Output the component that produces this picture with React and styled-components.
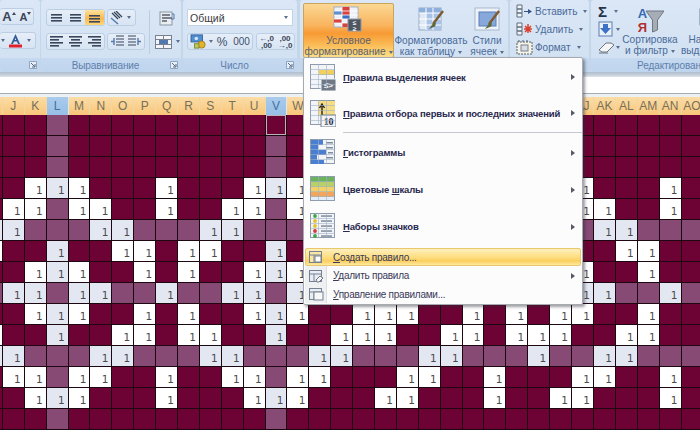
import React from "react";
import styled, { createGlobalStyle } from "styled-components";

const GlobalStyle = createGlobalStyle`
  html, body { margin: 0; padding: 0; background: #fff; }
  * { box-sizing: border-box; }
`;

const Root = styled.div`
  position: relative;
  width: 700px;
  height: 431px;
  overflow: hidden;
  font-family: "Liberation Sans", Arial, sans-serif;
`;

/* ---------- ribbon ---------- */
const Ribbon = styled.div`
  display: flex;
  height: 72px;
  background: #c3d6ea;
`;

const Group = styled.div`
  flex: none;
  width: ${(p) => p.$w}px;
  margin-left: ${(p) => p.$ml || 0}px;
  display: flex;
  flex-direction: column;
  background: linear-gradient(#dbe7f6, #d3e2f3 70%);
  border-radius: 3px;
  overflow: hidden;
`;

const Body = styled.div`
  flex: 1;
  display: flex;
  min-height: 0;
  padding: ${(p) => p.$pad || "0"};
`;

const Label = styled.div`
  flex: none;
  height: 14px;
  display: flex;
  align-items: center;
  background: linear-gradient(#c5d9f0, #bfd5ee);
  color: #5f7fab;
  font-size: 10px;
  padding-right: 3px;
`;

const LabelText = styled.span`
  flex: 1;
  text-align: center;
  white-space: nowrap;
  letter-spacing: -0.1px;
`;

const ShadowStrip = styled.div`
  height: 5px;
  background: linear-gradient(#aebdcd, #c6d0db 60%, #dfe5ec);
`;

const FormulaBar = styled.div`
  height: 17px;
  background: #fff;
  border-bottom: 1px solid #a5acb3;
`;

const Spacer = styled.div`
  height: 3px;
  background: #eef1f4;
`;

const Rows = styled.div`
  display: flex;
  flex-direction: column;
  gap: ${(p) => p.$gap || 0}px;
`;

const Row = styled.div`
  display: flex;
  align-items: center;
  justify-content: ${(p) => p.$justify || "flex-start"};
  height: 17px;
  gap: ${(p) => p.$gap || 0}px;
`;

const ToolGroup = styled.div`
  display: flex;
  align-items: center;
  height: 17px;
  border: 1px solid #bccee4;
  border-left-width: ${(p) => (p.$open ? 0 : 1)}px;
  border-radius: 3px;
  background: linear-gradient(#e6eef8, #d7e4f3);
`;

const Tool = styled.div`
  flex: none;
  width: ${(p) => p.$w || 19}px;
  height: 15px;
  display: flex;
  align-items: center;
  justify-content: center;
  font-size: ${(p) => p.$fs || 11}px;
  font-weight: ${(p) => (p.$bold ? "bold" : "normal")};
  color: ${(p) => (p.$bold ? "#3a4658" : "#3d4f6b")};
  background: ${(p) =>
    p.$active ? "linear-gradient(#fde3a0, #fbb84f 55%, #fdd77c)" : "transparent"};
`;

const DecimalTool = styled(Tool)`
  flex-direction: column;
  line-height: 7px;
`;

const Divider = styled.div`
  width: 1px;
  height: 44px;
  margin: 1px 3px 0 4px;
  background: #bccde1;
`;

const StackCol = styled.div`
  flex: 1;
  display: flex;
  flex-direction: column;
  align-items: center;
  gap: 7px;
`;

const Combo = styled.div`
  width: 106px;
  height: 17px;
  display: flex;
  align-items: center;
  justify-content: space-between;
  padding: 0 4px 0 2px;
  background: #fff;
  border: 1px solid #c4d4e6;
  color: #3c3c44;
  font-size: 10.5px;
`;

const BigButton = styled.div`
  flex: none;
  width: ${(p) => p.$w}px;
  height: 55px;
  margin-left: ${(p) => p.$ml || 0}px;
  display: flex;
  flex-direction: column;
  align-items: center;
  padding-top: 3px;
  border-radius: 2px;
  color: #4a6a98;
  font-size: 10.1px;
  line-height: 11px;
  white-space: nowrap;
  ${(p) =>
    p.$hot &&
    `background: linear-gradient(#fbd894, #f9b45f 40%, #f79a34 55%, #fbc05c 80%, #fde08c);
     border: 1px solid #c9a45c;
     color: #57616e;
     padding-top: 2px;`}
`;

const BigIcon = styled.div`
  height: 29px;
  display: flex;
  align-items: flex-start;
`;

const CellCommand = styled.div`
  height: 18px;
  display: flex;
  align-items: center;
  gap: ${(p) => p.$gap ?? 2}px;
  color: #4a6a98;
  font-size: 10px;
  white-space: nowrap;
`;

const SigmaGlyph = styled.span`
  font-size: 15px;
  font-weight: bold;
  color: #27324a;
  line-height: 15px;
`;

const Caret = styled.span`
  display: inline-block;
  width: 0;
  height: 0;
  margin-left: ${(p) => p.$ml ?? 4}px;
  vertical-align: middle;
  border-left: 2.5px solid transparent;
  border-right: 2.5px solid transparent;
  border-top: 3px solid #5b6f8c;
`;

const Icon = styled.svg`
  display: block;
  flex: none;
  ${(p) => p.$flip && "transform: scaleX(-1);"}
  ${(p) => p.$raised && "margin-bottom: 7px;"}
`;

/* ---------- sheet ---------- */
const COLS = "I J K L M N O P Q R S T U V W X Y Z AA AB AC AD AE AF AG AH AI AJ AK AL AM AN AO".split(" ");
const BAND_COLS = ["L", "V"];
const BAND_ROWS = [5, 8, 11];

const ONES = [
  [],
  [],
  [],
  ["K", "L", "M", "Q", "U", "V", "W", "AJ", "AN"],
  ["J", "K", "M", "N", "Q", "T", "U", "W", "AJ", "AK", "AN"],
  ["I", "J", "N", "O", "S", "T", "AK", "AL"],
  ["I", "L", "O", "P", "R", "S", "V", "AL", "AM"],
  ["K", "L", "M", "P", "R", "U", "V", "W", "AJ", "AM"],
  ["J", "K", "M", "N", "Q", "T", "U", "W", "AJ", "AK", "AN"],
  ["K", "L", "M", "P", "R", "U", "V", "W", "Z", "AA", "AB", "AE", "AG", "AI", "AJ", "AM"],
  ["I", "L", "O", "P", "R", "S", "V", "Y", "Z", "AA", "AD", "AE", "AG", "AH", "AI", "AL", "AM"],
  ["I", "J", "N", "O", "S", "T", "X", "Y", "AC", "AD", "AH", "AK", "AL"],
  ["J", "K", "M", "N", "Q", "T", "U", "W", "X", "AB", "AC", "AF", "AJ", "AK", "AN"],
  ["K", "L", "M", "Q", "U", "V", "W", "AA", "AB", "AF", "AI", "AJ", "AN"],
  [],
];

const Sheet = styled.div`
  margin-left: -19px;
  width: 760px;
`;

const Grid = styled.div`
  display: grid;
  grid-template-columns: repeat(${COLS.length}, 21.9px);
  grid-auto-rows: ${(p) => p.$row}px;
`;

const HeadCell = styled.div`
  display: flex;
  align-items: center;
  justify-content: center;
  font-size: 12px;
  color: ${(p) => (p.$on ? "#47709f" : "#77705a")};
  background: ${(p) =>
    p.$on ? "linear-gradient(#a9cbec, #98bfe6)" : "linear-gradient(#fbdda6, #f9c679)"};
  border-right: 1px solid ${(p) => (p.$on ? "#dce8f4" : "#f2d6a8")};
`;

const cellBg = { dark: "#6d0334", band: "#874a74", one: "#ffffff", bandOne: "#e3e7f2" };

const Cell = styled.div`
  display: flex;
  align-items: flex-end;
  justify-content: flex-end;
  padding: 0 3px 2px 0;
  background: ${(p) => cellBg[p.$kind]};
  border-right: 1px solid #1d0711;
  border-bottom: 1px solid #1d0711;
  color: #4a4a4a;
  font-family: "DejaVu Sans", sans-serif;
  font-size: 10.5px;
  line-height: 11px;
  ${(p) => p.$selected && "box-shadow: inset 0 0 0 1px #b9b4bc;"}
`;

/* ---------- dropdown menu ---------- */
const Menu = styled.div`
  position: absolute;
  left: 303px;
  top: 57px;
  width: 280px;
  height: 248px;
  padding-top: 1px;
  display: flex;
  flex-direction: column;
  background: #fcfcfd;
  border: 1px solid #a7abb0;
  border-radius: 2px;
  box-shadow: 2px 2px 3px rgba(40, 40, 50, 0.45);
`;

const BigItem = styled.div`
  flex: none;
  height: ${(p) => p.$h}px;
  display: flex;
  align-items: center;
  padding: 0 7px 0 6px;
  color: #29294d;
  font-size: 9.5px;
  font-weight: bold;
  letter-spacing: -0.15px;
`;

const ItemIcon = styled.div`
  flex: none;
  width: 33px;
`;

const ItemText = styled.span`
  flex: 1;
  white-space: nowrap;
`;

const Arrow = styled.span`
  flex: none;
  width: 0;
  height: 0;
  border-top: 3.5px solid transparent;
  border-bottom: 3.5px solid transparent;
  border-left: 4px solid #555a66;
`;

const Separator = styled.div`
  flex: none;
  height: 3px;
  margin-left: 39px;
  display: flex;
  align-items: center;
  &::before {
    content: "";
    flex: 1;
    height: 1px;
    background: #c6c9ce;
  }
`;

const SmallItem = styled.div`
  flex: none;
  height: ${(p) => p.$h}px;
  margin: ${(p) => (p.$active ? "3px 1px 0" : "0 1px")};
  display: flex;
  align-items: center;
  padding-right: 6px;
  color: #3a3a58;
  font-size: 10px;
  letter-spacing: -0.25px;
  ${(p) =>
    p.$active &&
    `background: linear-gradient(#fef0bd, #fddc7c 55%, #fbcf5e 75%, #fee9a2);
     border: 1px solid #e9c76c;
     border-radius: 2px;`}
`;

const Gutter = styled.div`
  flex: none;
  width: ${(p) => (p.$plain ? 21 : 22)}px;
  align-self: stretch;
  display: flex;
  align-items: center;
  justify-content: center;
  margin-right: 6px;
  background: ${(p) => (p.$plain ? "transparent" : "#eff0f2")};
  border-right: 1px solid ${(p) => (p.$plain ? "transparent" : "#dcdee2")};
`;

/* ---------- icons ---------- */
const Lines = ({ rows, w = 15, h = 13, c = "#39475c" }) => (
  <Icon width={w} height={h} viewBox={`0 0 ${w} ${h}`}>
    {rows.map(([a, b, y], i) => (
      <rect key={i} x={a} y={y} width={b - a} height="1.6" fill={c} />
    ))}
  </Icon>
);

const FontUp = ({ up }) => (
  <Tool $w={up ? 18 : 15} $fs={up ? 13 : 11} $bold>
    A
    <Icon width="4" height="3" viewBox="0 0 4 3" $raised>
      <path d={up ? "M0 3L2 0l2 3z" : "M0 0l2 3 2-3z"} fill="#445" />
    </Icon>
  </Tool>
);

const FontColor = () => (
  <Icon width="15" height="15" viewBox="0 0 15 15">
    <path d="M7.5 1L3 11h2l1-2.6h3L10 11h2L7.5 1zM6.8 7l.7-2.2L8.2 7z" fill="#2d5a9a" />
    <rect x="1" y="11.5" width="13" height="3" fill="#e0202a" />
  </Icon>
);

const Orientation = () => (
  <Icon width="16" height="14" viewBox="0 0 16 14">
    <path d="M2 2l6 6M4 1l6 6M6 0l6 6" stroke="#39475c" strokeWidth="1.3" />
    <path d="M1 7l7 6" stroke="#5278ad" strokeWidth="1.4" />
  </Icon>
);

const Indent = ({ flip }) => (
  <Icon width="14" height="13" viewBox="0 0 14 13" $flip={flip}>
    <path d="M6 1h8M6 4h8M6 7h8M6 10h8" stroke="#39475c" strokeWidth="1.2" />
    <path d="M4 3v7M1 6.5h3" stroke="#5278ad" strokeWidth="1.4" />
  </Icon>
);

const Wrap = () => (
  <Icon width="16" height="16" viewBox="0 0 16 16">
    <rect x="1" y="2" width="12" height="13" fill="#e9edf2" stroke="#8b97a5" />
    <path d="M3 5h8M3 8h10M3 11h5" stroke="#555f6d" strokeWidth="1.4" />
    <path d="M13 4h2v5h-3" stroke="#5278ad" fill="none" />
  </Icon>
);

const Merge = () => (
  <Icon width="17" height="14" viewBox="0 0 17 14">
    <rect x="0.5" y="0.5" width="16" height="13" fill="#f3f5f8" stroke="#77818f" />
    <path d="M0 4.5h17M0 9.5h17" stroke="#77818f" />
    <rect x="4" y="5" width="9" height="4" fill="#5278ad" />
    <path d="M8.5 0v4M8.5 10v4" stroke="#77818f" />
  </Icon>
);

const Currency = () => (
  <Icon width="19" height="15" viewBox="0 0 19 17">
    <rect x="1" y="1" width="13" height="8" fill="#4f8fd0" stroke="#2f5f9c" />
    <circle cx="7" cy="5" r="2" fill="#d4e6f8" />
    <circle cx="13" cy="12" r="4" fill="#e3b330" stroke="#a47c12" />
    <rect x="5" y="11" width="5" height="5" fill="#b8c85a" stroke="#7c8a2a" />
  </Icon>
);

const Decimal = ({ more }) => (
  <DecimalTool $w={more ? 19 : 18} $fs={8} $bold>
    <span>{more ? "←,0" : ",00"}</span>
    <span>{more ? ",00" : "→,0"}</span>
  </DecimalTool>
);

const CondIcon = () => (
  <Icon width="32" height="27" viewBox="0 0 32 27">
    <rect x="1" y="1" width="24" height="20" fill="#eef2f8" stroke="#9fb0c6" />
    <rect x="1" y="5" width="8" height="4" fill="#5e8fd0" />
    <rect x="9" y="1" width="8" height="8" fill="#d8423e" />
    <rect x="9" y="9" width="8" height="4" fill="#3f6fc0" />
    <rect x="1" y="13" width="8" height="4" fill="#d8423e" />
    <rect x="9" y="17" width="8" height="4" fill="#d8423e" />
    <path d="M9 1v20M17 1v20M1 5h24M1 9h24M1 13h24M1 17h24" stroke="#fff" strokeWidth="0.8" />
    <rect x="15" y="13" width="13" height="12" fill="#4e5662" stroke="#8f98a4" />
    <text x="21.5" y="19" textAnchor="middle" fontSize="6.5" fontWeight="bold" fill="#fff" fontFamily="Liberation Sans">≤</text>
    <text x="21.5" y="24.5" textAnchor="middle" fontSize="6.5" fontWeight="bold" fill="#fff" fontFamily="Liberation Sans">≥</text>
  </Icon>
);

const BrushTable = ({ big }) => (
  <Icon width="30" height="27" viewBox="0 0 30 27">
    {big ? (
      <>
        <rect x="3" y="2" width="22" height="22" fill="#dfe8f5" stroke="#96abc6" />
        <rect x="3" y="2" width="22" height="5" fill="#8fb0dc" />
        <rect x="10" y="7" width="15" height="17" fill="#a9c4e8" />
        <path d="M10 2v22M17 2v22M3 7h22M3 13h22M3 19h22" stroke="#fff" />
      </>
    ) : (
      <>
        <rect x="3" y="2" width="24" height="22" fill="#eef3fa" stroke="#a9b8cc" />
        <rect x="7" y="6" width="17" height="14" fill="#86a8db" stroke="#5a7fb8" />
      </>
    )}
    <path d="M27 5L17 18" stroke="#7d5a2c" strokeWidth="2.4" />
    <path d="M18 16l-5 7 6-2.5 1-3z" fill="#5d6a3a" />
  </Icon>
);

const Insert = ({ mark, c }) => (
  <Icon width="17" height="16" viewBox="0 0 17 16">
    <path d="M1 2h5v4H1zM1 6h5v4H1zM1 10h5v4H1z" fill="#f2f5f9" stroke="#5f6c7c" />
    {mark === "arrow" ? (
      <path d="M8 8h4V6l4 2.5-4 2.5V9H8z" fill={c} />
    ) : (
      <path d="M9 5l6 6M15 5l-6 6M12 3v9M8 8h8" stroke={c} strokeWidth="1.5" />
    )}
  </Icon>
);

const FormatIcon = () => (
  <Icon width="17" height="16" viewBox="0 0 17 16">
    <rect x="1" y="3" width="15" height="12" fill="#f7f4e6" stroke="#555f6d" strokeDasharray="2 1" />
    <rect x="5" y="6" width="7" height="6" fill="#d9dee6" stroke="#77818f" />
    <path d="M3 3V1M7 3V1M11 3V1" stroke="#555f6d" />
  </Icon>
);

const FillDown = () => (
  <Icon width="15" height="16" viewBox="0 0 15 16">
    <rect x="1" y="1" width="13" height="14" fill="#eaf0f8" stroke="#5b7db0" />
    <path d="M5 3h5v4h3l-5.5 6L2 7h3z" fill="#3b72c8" />
  </Icon>
);

const Eraser = () => (
  <Icon width="17" height="13" viewBox="0 0 17 13">
    <path d="M1 9l7-7h5l3 2-7 7H4z" fill="#f5f5f5" stroke="#6d7582" />
    <path d="M1 12h9" stroke="#6d7582" />
  </Icon>
);

const SortFilter = () => (
  <Icon width="27" height="28" viewBox="0 0 27 28">
    <text x="5.5" y="13" textAnchor="middle" fontSize="13" fontWeight="bold" fill="#3568b5" fontFamily="Liberation Sans">А</text>
    <text x="5.5" y="27" textAnchor="middle" fontSize="13" fontWeight="bold" fill="#b03030" fontFamily="Liberation Sans">Я</text>
    <path d="M9 6h18l-6.5 9v10l-5 2V15z" fill="#a7adb6" stroke="#6f7783" />
  </Icon>
);

const Binoculars = () => (
  <Icon width="18" height="24" viewBox="0 0 18 24">
    <rect x="2" y="3" width="5" height="18" rx="1" fill="#e6eef8" stroke="#6d7f98" />
    <rect x="11" y="3" width="5" height="18" rx="1" fill="#e6eef8" stroke="#6d7f98" />
    <rect x="7" y="8" width="4" height="6" fill="#8da3c0" />
  </Icon>
);

const launcher = (
  <Icon width="8" height="8" viewBox="0 0 8 8">
    <path d="M0.5 7.5v-7h7v7z" fill="#e8eff8" stroke="#8ea5c4" />
    <path d="M2 2l3.5 3.5M6 3v3H3" stroke="#55677f" fill="none" />
  </Icon>
);

const MenuFrame = ({ children }) => (
  <Icon width="26" height="27" viewBox="0 0 26 27">
    <rect x="0.5" y="0.5" width="24" height="24" fill="#f2f4f8" stroke="#8d9bad" />
    {children}
    <path d="M0 5.5h25M0 10.5h25M0 15.5h25M0 20.5h25M8.5 0v25M16.5 0v25" stroke="#9fb1c8" strokeWidth="0.6" />
  </Icon>
);

const menuIcons = {
  rules: (
    <MenuFrame>
      <rect x="9" y="6" width="15" height="5" fill="#f2cf5e" />
      <rect x="11" y="15" width="15" height="12" fill="#6f7885" stroke="#f0f2f5" />
      <text x="18.5" y="24" textAnchor="middle" fontSize="8" fontWeight="bold" fill="#fff" fontFamily="Liberation Sans">≤&gt;</text>
    </MenuFrame>
  ),
  top: (
    <MenuFrame>
      <rect x="8" y="1" width="17" height="15" fill="#f6dc84" />
      <path d="M12 15V5M9.5 8L12 4l2.5 4" stroke="#222" strokeWidth="1.4" fill="none" />
      <rect x="11" y="15" width="15" height="12" fill="#f1f3f6" stroke="#77818f" />
      <text x="18.5" y="25" textAnchor="middle" fontSize="10" fontWeight="bold" fill="#1d2a44" fontFamily="Liberation Serif">10</text>
    </MenuFrame>
  ),
  bars: (
    <MenuFrame>
      <path d="M1 1h12v5H8v5h8v5H7v5h7v4H1z" fill="#4a7ed0" />
      <rect x="16" y="3" width="7" height="1.5" fill="#7f8b9a" />
      <rect x="16" y="8" width="7" height="1.5" fill="#7f8b9a" />
      <rect x="18" y="13" width="5" height="1.5" fill="#7f8b9a" />
      <rect x="16" y="18" width="7" height="1.5" fill="#7f8b9a" />
    </MenuFrame>
  ),
  scales: (
    <MenuFrame>
      <rect x="1" y="1" width="23" height="5" fill="#6cb35e" />
      <rect x="1" y="6" width="23" height="5" fill="#b9cf68" />
      <rect x="1" y="11" width="23" height="5" fill="#f4d166" />
      <rect x="1" y="16" width="23" height="5" fill="#f2a65c" />
      <rect x="1" y="21" width="23" height="3" fill="#e3edf7" />
    </MenuFrame>
  ),
  sets: (
    <MenuFrame>
      {["#3fa548", "#e7c22c", "#e7c22c", "#d33a32", "#3fa548"].map((c, i) => (
        <React.Fragment key={i}>
          <circle cx="5" cy={3 + i * 5} r="1.9" fill={c} />
          <rect x="11" y={2.3 + i * 5} width="11" height="1.5" fill="#7f8b9a" />
        </React.Fragment>
      ))}
    </MenuFrame>
  ),
};

const SmallTable = ({ tint, children }) => (
  <Icon width="16" height="16" viewBox="0 0 16 16">
    <rect x="1.5" y="2.5" width="12" height="11" fill={tint} stroke="#77818f" />
    <path d="M1.5 6h12M6 6v7.5" stroke="#77818f" />
    {children}
  </Icon>
);

const Underlined = ({ before = "", letter, after }) => (
  <>
    {before}
    <u>{letter}</u>
    {after}
  </>
);

const App = () => (
  <Root>
    <GlobalStyle />
    <Ribbon>
      <Group $w={40}>
        <Body $pad="8px 0 0 0">
          <Rows $gap={7}>
            <Row>
              <ToolGroup $open>
                <FontUp up />
                <FontUp />
              </ToolGroup>
            </Row>
            <Row>
              <ToolGroup $open>
                <Caret $ml={1} />
                <Tool $w={21}><FontColor /></Tool>
                <Caret $ml={1} />
                <Tool $w={4} />
              </ToolGroup>
            </Row>
          </Rows>
        </Body>
        <Label>
          <LabelText />
          {launcher}
        </Label>
      </Group>

      <Group $w={140} $ml={1}>
        <Body $pad="9px 0 0 5px">
          <Rows $gap={7}>
            <Row $gap={2}>
              <ToolGroup>
                <Tool><Lines rows={[[2, 13, 1], [2, 13, 4], [2, 13, 7]]} h={10} /></Tool>
                <Tool><Lines rows={[[2, 13, 2], [2, 13, 5], [2, 13, 8]]} h={11} /></Tool>
                <Tool $active><Lines rows={[[2, 13, 4], [2, 13, 7], [2, 13, 10]]} /></Tool>
              </ToolGroup>
              <ToolGroup>
                <Tool $w={19}><Orientation /></Tool>
                <Caret $ml={0} />
                <Tool $w={4} />
              </ToolGroup>
            </Row>
            <Row $gap={2}>
              <ToolGroup>
                <Tool><Lines rows={[[1, 14, 1], [1, 10, 4], [1, 14, 7], [1, 10, 10]]} /></Tool>
                <Tool><Lines rows={[[1, 14, 1], [3, 12, 4], [1, 14, 7], [3, 12, 10]]} /></Tool>
                <Tool><Lines rows={[[1, 14, 1], [5, 14, 4], [1, 14, 7], [5, 14, 10]]} /></Tool>
              </ToolGroup>
              <ToolGroup>
                <Tool $w={18}><Indent /></Tool>
                <Tool $w={18}><Indent flip /></Tool>
              </ToolGroup>
            </Row>
          </Rows>
          <Divider />
          <StackCol>
            <Row><Wrap /></Row>
            <Row>
              <Merge />
              <Caret />
            </Row>
          </StackCol>
        </Body>
        <Label>
          <LabelText>Выравнивание</LabelText>
          {launcher}
        </Label>
      </Group>

      <Group $w={114} $ml={2}>
        <Body $pad="9px 0 0 4px">
          <Rows $gap={7}>
            <Combo>
              Общий
              <Caret $ml={0} />
            </Combo>
            <Row $gap={3}>
              <ToolGroup>
                <Tool $w={20}><Currency /></Tool>
                <Caret $ml={1} />
                <Tool $w={18} $fs={12}>%</Tool>
                <Tool $w={21} $fs={10}>000</Tool>
              </ToolGroup>
              <ToolGroup>
                <Decimal more />
                <Decimal />
              </ToolGroup>
            </Row>
          </Rows>
        </Body>
        <Label>
          <LabelText>Число</LabelText>
          {launcher}
        </Label>
      </Group>

      <Group $w={208} $ml={3}>
        <Body $pad="3px 0 0 3px">
          <BigButton $w={91} $hot>
            <BigIcon><CondIcon /></BigIcon>
            <span>Условное</span>
            <span>форматирование<Caret $ml={3} /></span>
          </BigButton>
          <BigButton $w={72} $ml={1}>
            <BigIcon><BrushTable big /></BigIcon>
            <span>Форматировать</span>
            <span>как таблицу<Caret $ml={3} /></span>
          </BigButton>
          <BigButton $w={40}>
            <BigIcon><BrushTable /></BigIcon>
            <span>Стили</span>
            <span>ячеек<Caret $ml={3} /></span>
          </BigButton>
        </Body>
        <Label><LabelText>Стили</LabelText></Label>
      </Group>

      <Group $w={79} $ml={2}>
        <Body $pad="2px 0 0 6px">
          <Rows>
            <CellCommand><Insert mark="arrow" c="#35518a" />Вставить<Caret /></CellCommand>
            <CellCommand><Insert mark="star" c="#d8402f" />Удалить<Caret /></CellCommand>
            <CellCommand><FormatIcon />Формат<Caret /></CellCommand>
          </Rows>
        </Body>
        <Label><LabelText>Ячейки</LabelText></Label>
      </Group>

      <Group $w={170} $ml={2}>
        <Body $pad="2px 0 0 7px">
          <Rows>
            <CellCommand $gap={5}><SigmaGlyph>Σ</SigmaGlyph><Caret $ml={2} /></CellCommand>
            <CellCommand><FillDown /><Caret $ml={1} /></CellCommand>
            <CellCommand $gap={1}><Eraser /><Caret $ml={0} /></CellCommand>
          </Rows>
          <BigButton $w={60}>
            <BigIcon><SortFilter /></BigIcon>
            <span>Сортировка</span>
            <span>и фильтр<Caret $ml={3} /></span>
          </BigButton>
          <BigButton $w={50} $ml={2}>
            <BigIcon><Binoculars /></BigIcon>
            <span>Найти и</span>
            <span>выделить<Caret $ml={3} /></span>
          </BigButton>
        </Body>
        <Label><LabelText>Редактирование</LabelText></Label>
      </Group>
    </Ribbon>
    <ShadowStrip />
    <FormulaBar />
    <Spacer />

    <Sheet>
      <Grid $row={18}>
        {COLS.map((c) => (
          <HeadCell key={c} $on={BAND_COLS.includes(c)}>{c}</HeadCell>
        ))}
      </Grid>
      <Grid $row={21}>
        {ONES.flatMap((ones, r) =>
          COLS.map((c) => {
            const has = ones.includes(c);
            const band = BAND_ROWS.includes(r) || BAND_COLS.includes(c);
            const kind = has ? (band ? "bandOne" : "one") : band ? "band" : "dark";
            const selected = r === 0 && c === "V";
            return (
              <Cell key={c + r} $kind={selected ? "dark" : kind} $selected={selected}>
                {has ? "1" : ""}
              </Cell>
            );
          })
        )}
      </Grid>
    </Sheet>

    <Menu>
      <BigItem $h={36}>
        <ItemIcon>{menuIcons.rules}</ItemIcon>
        <ItemText><Underlined letter="П" after="равила выделения ячеек" /></ItemText>
        <Arrow />
      </BigItem>
      <BigItem $h={36}>
        <ItemIcon>{menuIcons.top}</ItemIcon>
        <ItemText><Underlined letter="П" after="равила отбора первых и последних значений" /></ItemText>
        <Arrow />
      </BigItem>
      <Separator />
      <BigItem $h={37}>
        <ItemIcon>{menuIcons.bars}</ItemIcon>
        <ItemText><Underlined letter="Г" after="истограммы" /></ItemText>
        <Arrow />
      </BigItem>
      <BigItem $h={37}>
        <ItemIcon>{menuIcons.scales}</ItemIcon>
        <ItemText><Underlined before="Цветовые " letter="ш" after="калы" /></ItemText>
        <Arrow />
      </BigItem>
      <BigItem $h={37}>
        <ItemIcon>{menuIcons.sets}</ItemIcon>
        <ItemText><Underlined letter="Н" after="аборы значков" /></ItemText>
        <Arrow />
      </BigItem>
      <SmallItem $h={18} $active>
        <Gutter $plain>
          <SmallTable tint="#f7e6a8"><rect x="7" y="7" width="6" height="6" fill="#fff" stroke="#77818f" /></SmallTable>
        </Gutter>
        <ItemText><Underlined letter="С" after="оздать правило..." /></ItemText>
      </SmallItem>
      <SmallItem $h={19}>
        <Gutter>
          <SmallTable tint="#e8edf5"><path d="M8 12l4-4 3 2-4 4H9z" fill="#f4f4f4" stroke="#6d7582" /></SmallTable>
        </Gutter>
        <ItemText><Underlined letter="У" after="далить правила" /></ItemText>
        <Arrow />
      </SmallItem>
      <SmallItem $h={18}>
        <Gutter>
          <SmallTable tint="#e8edf5"><rect x="6" y="6" width="9" height="8" fill="#f8f8f8" stroke="#77818f" /></SmallTable>
        </Gutter>
        <ItemText><Underlined letter="У" after="правление правилами..." /></ItemText>
      </SmallItem>
    </Menu>
  </Root>
);

export default App;
